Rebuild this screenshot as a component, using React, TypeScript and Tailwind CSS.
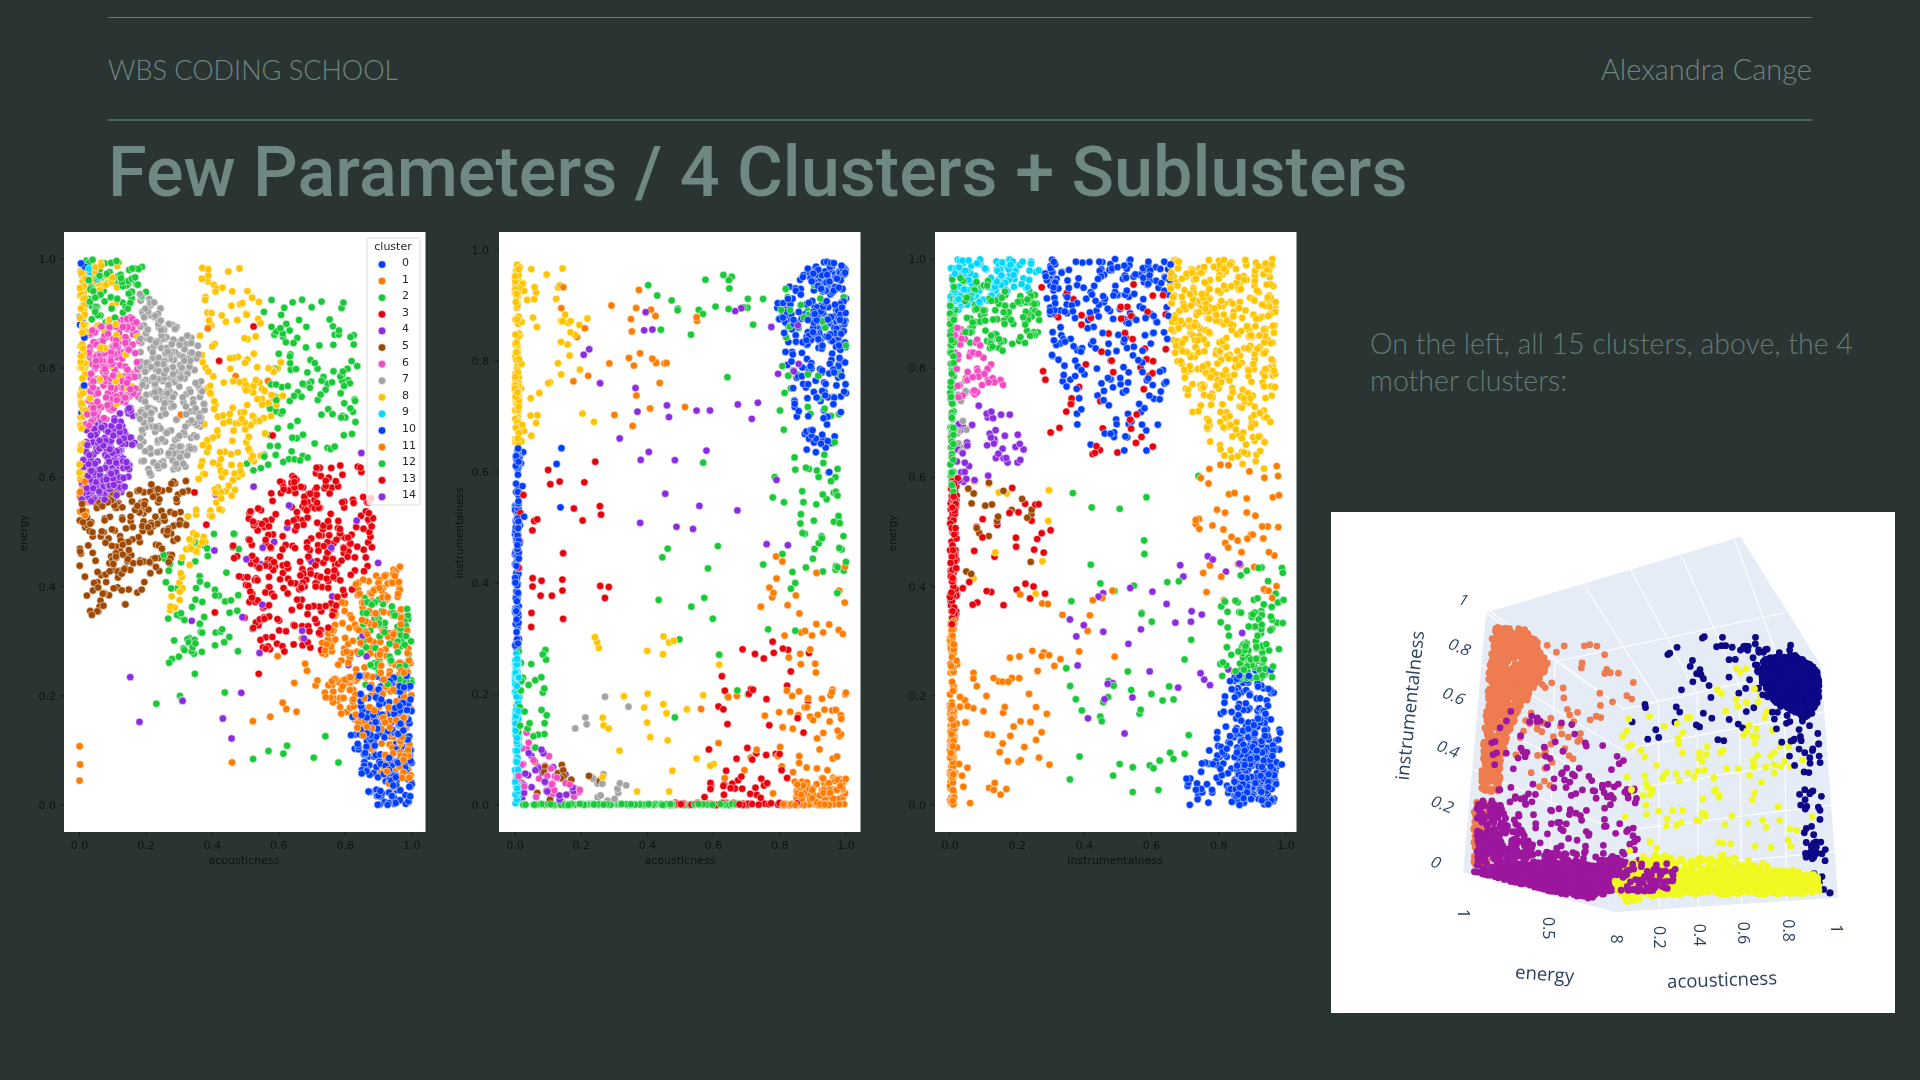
const C = {
  c0: "#023eff",
  c1: "#ff7c00",
  c2: "#1ac938",
  c3: "#e8000b",
  c4: "#8b2be2",
  c5: "#9f4800",
  c6: "#f14cc1",
  c7: "#a3a3a3",
  c8: "#ffc400",
  c9: "#00d7ff",
};

type Pt = [number, number];
type Region = { color: string; n: number; poly: Pt[]; bx?: number; by?: number };
type Dot = { x: number; y: number; color: string };

function rng(seed: number) {
  let a = seed;
  return () => {
    a = (a + 0x6d2b79f5) | 0;
    let t = Math.imul(a ^ (a >>> 15), 1 | a);
    t = (t + Math.imul(t ^ (t >>> 7), 61 | t)) ^ t;
    return ((t ^ (t >>> 14)) >>> 0) / 4294967296;
  };
}

function inside(p: Pt, poly: Pt[]) {
  let hit = false;
  for (let i = 0, j = poly.length - 1; i < poly.length; j = i++) {
    const [xi, yi] = poly[i];
    const [xj, yj] = poly[j];
    if (yi > p[1] !== yj > p[1] && p[0] < ((xj - xi) * (p[1] - yi)) / (yj - yi) + xi) hit = !hit;
  }
  return hit;
}

const rect = (x0: number, x1: number, y0: number, y1: number): Pt[] => [
  [x0, y0],
  [x1, y0],
  [x1, y1],
  [x0, y1],
];

function sample(regions: Region[], seed: number, mix = true): Dot[] {
  const r = rng(seed);
  const out: Dot[] = [];
  for (const reg of regions) {
    const xs = reg.poly.map((p) => p[0]);
    const ys = reg.poly.map((p) => p[1]);
    const x0 = Math.min(...xs);
    const x1 = Math.max(...xs);
    const y0 = Math.min(...ys);
    const y1 = Math.max(...ys);
    let made = 0;
    let tries = 0;
    while (made < reg.n && tries < reg.n * 60) {
      tries++;
      const x = x0 + (x1 - x0) * Math.pow(r(), reg.bx ?? 1);
      const y = y0 + (y1 - y0) * Math.pow(r(), reg.by ?? 1);
      if (inside([x, y], reg.poly)) {
        out.push({ x, y, color: reg.color });
        made++;
      }
    }
  }
  if (mix) {
    for (let i = out.length - 1; i > 0; i--) {
      const j = Math.floor(r() * (i + 1));
      [out[i], out[j]] = [out[j], out[i]];
    }
  }
  return out;
}

const chart1: Region[] = [
  { color: C.c8, n: 95, poly: rect(0, 0.02, 0.6, 0.98) },
  { color: C.c0, n: 16, poly: rect(0, 0.02, 0.62, 1) },
  { color: C.c9, n: 6, poly: rect(0, 0.06, 0.96, 1) },
  { color: C.c1, n: 22, poly: rect(0, 0.02, 0.53, 0.62) },
  { color: C.c2, n: 80, poly: [[0.02, 1], [0.2, 1], [0.2, 0.93], [0.09, 0.88], [0.03, 0.87]] },
  { color: C.c8, n: 32, poly: rect(0.01, 0.12, 0.83, 1) },
  { color: C.c6, n: 210, poly: [[0.03, 0.88], [0.18, 0.9], [0.18, 0.74], [0.1, 0.71], [0.02, 0.69]] },
  { color: C.c8, n: 16, poly: rect(0.03, 0.18, 0.73, 0.9) },
  { color: C.c4, n: 210, poly: [[0.02, 0.69], [0.1, 0.71], [0.16, 0.74], [0.17, 0.62], [0.13, 0.56], [0.0, 0.55]] },
  { color: C.c7, n: 300, poly: [[0.18, 0.94], [0.24, 0.93], [0.36, 0.84], [0.38, 0.72], [0.33, 0.62], [0.19, 0.6], [0.17, 0.74]] },
  { color: C.c5, n: 210, poly: [[0, 0.56], [0.16, 0.58], [0.33, 0.605], [0.33, 0.52], [0.28, 0.45], [0.15, 0.37], [0.02, 0.33], [0, 0.42]] },
  { color: C.c8, n: 75, poly: [[0.37, 0.99], [0.48, 0.99], [0.6, 0.86], [0.62, 0.72], [0.39, 0.72], [0.36, 0.86]] },
  { color: C.c8, n: 125, poly: [[0.39, 0.78], [0.62, 0.78], [0.56, 0.64], [0.44, 0.55], [0.36, 0.42], [0.26, 0.33], [0.33, 0.55], [0.36, 0.62]] },
  { color: C.c2, n: 125, poly: [[0.55, 0.93], [0.8, 0.93], [0.86, 0.8], [0.82, 0.65], [0.62, 0.62], [0.48, 0.6], [0.58, 0.75]] },
  { color: C.c2, n: 60, poly: [[0.25, 0.46], [0.48, 0.52], [0.48, 0.32], [0.4, 0.28], [0.27, 0.28]] },
  { color: C.c2, n: 12, poly: rect(0.2, 0.48, 0.18, 0.3) },
  { color: C.c3, n: 310, poly: [[0.46, 0.5], [0.58, 0.59], [0.72, 0.63], [0.86, 0.62], [0.89, 0.52], [0.88, 0.44], [0.78, 0.36], [0.72, 0.27], [0.55, 0.28], [0.47, 0.36]] },
  { color: C.c2, n: 80, poly: [[0.84, 0.38], [1, 0.38], [1, 0.22], [0.84, 0.22]] },
  { color: C.c0, n: 230, poly: [[0.84, 0.24], [1, 0.24], [1, 0], [0.88, 0], [0.8, 0.12]], bx: 0.6 },
  { color: C.c1, n: 170, poly: [[0.78, 0.24], [1, 0.25], [1, 0.02], [0.9, 0.04], [0.85, 0.13], [0.72, 0.2]] },
  { color: C.c1, n: 150, poly: [[0.76, 0.36], [0.84, 0.41], [0.97, 0.44], [1, 0.26], [0.8, 0.22], [0.7, 0.28]] },
  { color: C.c4, n: 28, poly: rect(0.4, 0.9, 0.24, 0.66) },
  { color: C.c4, n: 7, poly: rect(0.05, 0.5, 0.08, 0.36) },
  { color: C.c1, n: 14, poly: rect(0.55, 0.8, 0.15, 0.34) },
  { color: C.c1, n: 8, poly: rect(0.3, 0.7, 0.0, 0.98) },
  { color: C.c3, n: 7, poly: rect(0.3, 0.6, 0.22, 0.93) },
  { color: C.c2, n: 7, poly: rect(0.45, 0.78, 0.06, 0.14) },
  { color: C.c1, n: 3, poly: [[0, 0], [0.002, 0], [0.002, 0.18], [0, 0.18]] },
];

const chart2: Region[] = [
  { color: C.c8, n: 130, poly: rect(0, 0.012, 0.65, 0.975) },
  { color: C.c8, n: 40, poly: rect(0.01, 0.16, 0.65, 0.97), bx: 1.5 },
  { color: C.c8, n: 14, poly: rect(0.1, 0.25, 0.68, 0.9) },
  { color: C.c1, n: 20, poly: rect(0.05, 0.48, 0.68, 0.97) },
  { color: C.c0, n: 120, poly: rect(0, 0.012, 0.28, 0.645) },
  { color: C.c0, n: 12, poly: rect(0.01, 0.17, 0.47, 0.65), bx: 2 },
  { color: C.c3, n: 30, poly: rect(0.01, 0.37, 0.32, 0.62), bx: 1.5 },
  { color: C.c9, n: 120, poly: rect(0, 0.012, 0, 0.275) },
  { color: C.c2, n: 32, poly: rect(0.01, 0.1, 0.1, 0.28), bx: 2 },
  { color: C.c0, n: 190, poly: [[0.78, 0.9], [0.88, 0.97], [1, 0.985], [1, 0.7], [0.95, 0.58], [0.88, 0.62], [0.82, 0.78]], by: 0.7 },
  { color: C.c0, n: 120, poly: rect(0.9, 1, 0.82, 0.98) },
  { color: C.c2, n: 40, poly: [[0.8, 0.92], [1, 0.96], [1, 0.7], [0.8, 0.7]] },
  { color: C.c2, n: 24, poly: rect(0.4, 0.85, 0.84, 0.97) },
  { color: C.c2, n: 50, poly: rect(0.78, 1, 0.38, 0.66), bx: 0.6 },
  { color: C.c2, n: 10, poly: rect(0.55, 0.85, 0.3, 0.8) },
  { color: C.c2, n: 14, poly: rect(0.4, 0.85, 0.15, 0.48) },
  { color: C.c4, n: 36, poly: rect(0.2, 0.88, 0.45, 0.92) },
  { color: C.c1, n: 10, poly: rect(0.25, 0.55, 0.68, 0.95) },
  { color: C.c1, n: 62, poly: rect(0.8, 1, 0.05, 0.45), bx: 0.8, by: 1.4 },
  { color: C.c1, n: 65, poly: rect(0.84, 1, 0.005, 0.05), bx: 0.8 },
  { color: C.c1, n: 8, poly: rect(0.7, 0.88, 0.34, 0.46) },
  { color: C.c1, n: 40, poly: rect(0.8, 1, 0, 0.002) },
  { color: C.c2, n: 150, poly: rect(0.02, 0.68, 0, 0.002) },
  { color: C.c3, n: 50, poly: rect(0.48, 0.86, 0, 0.004) },
  { color: C.c3, n: 42, poly: rect(0.53, 0.9, 0.01, 0.3) },
  { color: C.c3, n: 14, poly: rect(0.55, 0.85, 0.01, 0.04) },
  { color: C.c8, n: 30, poly: rect(0.24, 0.62, 0.02, 0.31) },
  { color: C.c1, n: 12, poly: rect(0.55, 0.82, 0.02, 0.2) },
  { color: C.c6, n: 34, poly: [[0.01, 0.14], [0.05, 0.13], [0.2, 0.03], [0.2, 0.005], [0.01, 0.005]] },
  { color: C.c4, n: 24, poly: [[0.02, 0.1], [0.08, 0.1], [0.2, 0.03], [0.18, 0.005], [0.02, 0.005]] },
  { color: C.c5, n: 16, poly: [[0.02, 0.08], [0.18, 0.1], [0.28, 0.08], [0.3, 0.005], [0.02, 0.005]] },
  { color: C.c7, n: 14, poly: [[0.18, 0.04], [0.26, 0.07], [0.34, 0.04], [0.34, 0.005], [0.18, 0.005]] },
  { color: C.c7, n: 5, poly: rect(0.18, 0.35, 0.08, 0.22) },
];

const chart3: Region[] = [
  { color: C.c9, n: 120, poly: [[0, 1], [0.26, 1], [0.27, 0.95], [0.15, 0.93], [0, 0.9]] },
  { color: C.c2, n: 125, poly: [[0, 0.97], [0.12, 0.96], [0.26, 0.94], [0.27, 0.86], [0.19, 0.83], [0.02, 0.84]] },
  { color: C.c2, n: 95, poly: rect(0, 0.012, 0.57, 0.92) },
  { color: C.c0, n: 250, poly: [[0.28, 1], [0.66, 1], [0.66, 0.82], [0.64, 0.62], [0.42, 0.62], [0.3, 0.82]], by: 0.5 },
  { color: C.c3, n: 55, poly: rect(0.27, 0.65, 0.64, 0.97) },
  { color: C.c8, n: 440, poly: [[0.65, 1], [0.97, 1], [0.97, 0.72], [0.93, 0.6], [0.8, 0.62], [0.72, 0.72], [0.66, 0.85]], by: 0.7 },
  { color: C.c6, n: 50, poly: [[0.01, 0.88], [0.08, 0.86], [0.17, 0.77], [0.02, 0.74]] },
  { color: C.c7, n: 14, poly: rect(0.01, 0.05, 0.64, 0.78) },
  { color: C.c4, n: 46, poly: [[0.01, 0.74], [0.22, 0.72], [0.22, 0.62], [0.06, 0.58], [0.01, 0.6]] },
  { color: C.c3, n: 100, poly: rect(0, 0.02, 0.33, 0.6) },
  { color: C.c3, n: 34, poly: rect(0.02, 0.3, 0.36, 0.6) },
  { color: C.c5, n: 22, poly: rect(0.04, 0.26, 0.42, 0.6) },
  { color: C.c8, n: 10, poly: rect(0.06, 0.3, 0.38, 0.6) },
  { color: C.c1, n: 130, poly: rect(0, 0.012, 0.0, 0.34) },
  { color: C.c1, n: 65, poly: rect(0.01, 0.3, 0.0, 0.3), bx: 1.5 },
  { color: C.c1, n: 14, poly: rect(0.2, 0.52, 0.22, 0.4) },
  { color: C.c1, n: 50, poly: rect(0.72, 0.98, 0.36, 0.63), by: 0.8 },
  { color: C.c2, n: 55, poly: rect(0.8, 0.98, 0.22, 0.38) },
  { color: C.c2, n: 40, poly: [[0.86, 0.3], [0.93, 0.3], [0.94, 0.23], [0.85, 0.23]] },
  { color: C.c2, n: 20, poly: rect(0.85, 1, 0.3, 0.45) },
  { color: C.c2, n: 30, poly: rect(0.35, 0.72, 0.02, 0.22) },
  { color: C.c2, n: 22, poly: rect(0.3, 0.75, 0.22, 0.62) },
  { color: C.c0, n: 190, poly: [[0.65, 0], [0.98, 0], [0.99, 0.1], [0.96, 0.25], [0.84, 0.25], [0.78, 0.12]], bx: 0.8 },
  { color: C.c0, n: 190, poly: [[0.84, 0], [0.97, 0], [0.97, 0.1], [0.93, 0.16], [0.86, 0.14]] },
  { color: C.c4, n: 30, poly: rect(0.35, 0.88, 0.2, 0.46) },
  { color: C.c4, n: 5, poly: rect(0.4, 0.62, 0.13, 0.24) },
];

function Dots({ dots }: { dots: Dot[] }) {
  return (
    <g stroke="#ffffff" strokeWidth={0.6} strokeOpacity={0.85}>
      {dots.map((d, i) => (
        <circle key={i} cx={d.x} cy={d.y} r={3.7} fill={d.color} />
      ))}
    </g>
  );
}

const legend = [C.c0, C.c1, C.c2, C.c3, C.c4, C.c5, C.c6, C.c7, C.c8, C.c9, C.c0, C.c1, C.c2, C.c3, C.c4];
const ticks = [0, 0.2, 0.4, 0.6, 0.8, 1];
const mplFont = "'DejaVu Sans', sans-serif";

type ChartProps = {
  left: number;
  width: number;
  card: number;
  x0: number;
  x1: number;
  yTop: number;
  labelEnd: number;
  xLabel: string;
  xLabelAt: number;
  yLabel: string;
  yLabelAt: number;
  regions: Region[];
  seed: number;
  withLegend?: boolean;
};

function Chart(p: ChartProps) {
  const px = (v: number) => p.x0 + (p.x1 - p.x0) * v;
  const py = (v: number) => 805 - (805 - p.yTop) * v;
  const dots = sample(p.regions, p.seed).map((d) => ({ ...d, x: px(d.x), y: py(d.y) }));
  return (
    <svg
      viewBox={`${p.left} 225 ${p.width} 660`}
      className="h-[660px] shrink-0 blur-[0.3px]"
      width={p.width}
      style={{ fontFamily: mplFont }}
    >
      <rect x={p.card} y={232} width={361.5} height={600} fill="#ffffff" />
      <Dots dots={dots} />
      {ticks.map((t) => (
        <g key={t} fill="#0e1312" fontSize={11}>
          <line x1={p.card - 4} x2={p.card} y1={py(t)} y2={py(t)} stroke="#0e1312" strokeWidth={0.8} />
          <text x={p.labelEnd} y={py(t) + 4} textAnchor="end">
            {t.toFixed(1)}
          </text>
          <line x1={px(t)} x2={px(t)} y1={832} y2={836} stroke="#0e1312" strokeWidth={0.8} />
          <text x={px(t)} y={849} textAnchor="middle">
            {t.toFixed(1)}
          </text>
        </g>
      ))}
      <text x={p.xLabelAt} y={864} textAnchor="middle" fontSize={11} fill="#0e1312">
        {p.xLabel}
      </text>
      <text
        transform={`translate(${p.yLabelAt} 533) rotate(-90)`}
        textAnchor="middle"
        fontSize={10.5}
        fill="#0e1312"
      >
        {p.yLabel}
      </text>
      {p.withLegend && (
        <g>
          <rect x={367} y={238} width={53} height={267} rx={2} fill="#ffffff" fillOpacity={0.8} stroke="#dcdcdc" />
          <text x={393} y={250} textAnchor="middle" fontSize={11} fill="#262626">
            cluster
          </text>
          {legend.map((c, i) => (
            <g key={i}>
              <circle cx={382} cy={264.5 + i * 16.6} r={3.8} fill={c} stroke="#ffffff" strokeWidth={0.5} />
              <text x={402} y={266 + i * 16.6} fontSize={11} fill="#262626">
                {i}
              </text>
            </g>
          ))}
        </g>
      )}
    </svg>
  );
}

// 3D plot: coordinates below are measured on a zoomed crop, sx/sy bring them to the card
const sx = (x: number) => (x - 30) / 2.613;
const sy = (y: number) => (y - 37) / 2.958;
const poly3 = (pts: Pt[]) => pts.map(([x, y]) => `${sx(x)},${sy(y)}`).join(" ");
const lerp = (a: Pt, b: Pt, t: number): Pt => [a[0] + (b[0] - a[0]) * t, a[1] + (b[1] - a[1]) * t];

const A: Pt = [375, 1105];
const B: Pt = [435, 335];
const Cn: Pt = [772, 1222];
const D: Pt = [795, 620];
const E: Pt = [1355, 1180];
const F: Pt = [1310, 490];
const G: Pt = [1100, 110];

const scene: Region[] = [
  { color: "#ee7c50", n: 800, poly: [[452, 372], [540, 385], [600, 490], [530, 610], [490, 700], [465, 870], [418, 865], [436, 620]] },
  { color: "#ee7c50", n: 70, poly: [[540, 400], [830, 430], [830, 580], [700, 720], [600, 850], [480, 860], [540, 620]] },
  { color: "#ee7c50", n: 90, poly: rect(403, 440, 880, 1085) },
  { color: "#9c179e", n: 110, poly: rect(410, 480, 890, 1050) },
  { color: "#9c179e", n: 170, poly: [[450, 620], [650, 640], [830, 800], [840, 1050], [440, 1050]], by: 0.8 },
  { color: "#9c179e", n: 500, poly: [[395, 1098], [430, 1000], [520, 960], [570, 1040], [830, 1060], [880, 1120], [700, 1182], [600, 1162]], by: 0.6 },
  { color: "#9c179e", n: 900, poly: [[400, 1100], [600, 1075], [800, 1085], [860, 1130], [700, 1175], [600, 1160]] },
  { color: "#0d0887", n: 50, poly: [[920, 400], [1150, 365], [1150, 720], [815, 720], [810, 600]] },
  { color: "#f0f921", n: 130, poly: [[790, 640], [1150, 470], [1290, 830], [1290, 1040], [800, 1040]] },
  { color: "#0d0887", n: 800, poly: [[1160, 470], [1250, 458], [1305, 510], [1305, 590], [1280, 650], [1190, 600], [1155, 540]] },
  { color: "#0d0887", n: 80, poly: [[1100, 420], [1230, 410], [1300, 620], [1310, 790], [1260, 830], [1190, 680]] },
  { color: "#0d0887", n: 48, poly: [[1250, 850], [1310, 850], [1335, 1165], [1280, 1165]] },
  { color: "#f0f921", n: 600, poly: [[840, 1045], [1050, 1050], [1300, 1110], [1310, 1165], [880, 1172], [795, 1195], [770, 1130]], by: 0.7 },
  { color: "#f0f921", n: 400, poly: [[900, 1100], [1280, 1110], [1290, 1160], [900, 1165]] },
  { color: "#9c179e", n: 70, poly: rect(780, 930, 1075, 1160) },
];

function Dots3({ dots }: { dots: Dot[] }) {
  return (
    <g>
      {dots.map((d, i) => (
        <circle key={i} cx={sx(d.x)} cy={sy(d.y)} r={3.4} fill={d.color} />
      ))}
    </g>
  );
}

function Plot3D() {
  const dots = sample(scene, 41, false);
  const levels = [0, 0.2, 0.4, 0.6, 0.8, 1];
  const acoustic: [Pt, Pt, Pt][] = [
    [[888, 1212], [886, 600], [690, 250]],
    [[990, 1205], [987, 578], [812, 205]],
    [[1103, 1198], [1097, 550], [945, 165]],
    [[1220, 1190], [1215, 522], [1085, 120]],
  ];
  const seg = (a: Pt, b: Pt) => ({ x1: sx(a[0]), y1: sy(a[1]), x2: sx(b[0]), y2: sy(b[1]) });
  const tickY: [string, number, number][] = [
    ["1", 375, 300],
    ["0.8", 365, 440],
    ["0.6", 350, 585],
    ["0.4", 335, 742],
    ["0.2", 320, 905],
    ["0", 303, 1077],
  ];
  const tickX: [string, number, number][] = [
    ["1", 372, 1225],
    ["0.5", 595, 1268],
    ["8", 772, 1300],
    ["0.2", 885, 1295],
    ["0.4", 990, 1288],
    ["0.6", 1105, 1282],
    ["0.8", 1222, 1275],
    ["1", 1348, 1270],
  ];
  return (
    <svg width={564} height={501} className="block blur-[0.3px]" style={{ fontFamily: "'Open Sans', sans-serif" }}>
      <polygon points={poly3([B, G, F, D])} fill="#e5ecf6" />
      <polygon points={poly3([A, B, D, Cn])} fill="#e5ecf6" />
      <polygon points={poly3([D, F, E, Cn])} fill="#e5ecf6" />
      <g stroke="#ffffff" strokeWidth={1.1}>
        {levels.map((t) => (
          <g key={t}>
            <line {...seg(lerp(A, B, t), lerp(Cn, D, t))} />
            <line {...seg(lerp(Cn, D, t), lerp(E, F, t))} />
          </g>
        ))}
        {acoustic.map(([a, b, c], i) => (
          <g key={i}>
            <line {...seg(a, b)} />
            <line {...seg(b, c)} />
          </g>
        ))}
        <line {...seg([600, 1170], [615, 480])} />
        <line {...seg([615, 480], [1215, 335])} />
        <line {...seg([445, 330], [795, 620])} />
      </g>
      <Dots3 dots={dots} />
      <g fill="#2a3f5f" fontSize={16}>
        {tickY.map(([t, x, y], i) => (
          <text key={i} textAnchor="middle" dominantBaseline="middle" transform={`translate(${sx(x)} ${sy(y)}) rotate(22) skewX(-10)`}>
            {t}
          </text>
        ))}
        {tickX.map(([t, x, y], i) => (
          <text key={i} textAnchor="middle" dominantBaseline="middle" transform={`translate(${sx(x)} ${sy(y)}) rotate(90)`}>
            {t}
          </text>
        ))}
      </g>
      <g fill="#2a3f5f" fontSize={18.5}>
        <text textAnchor="middle" dominantBaseline="middle" transform={`translate(${sx(240)} ${sy(610)}) rotate(-84)`}>
          instrumentalness
        </text>
        <text textAnchor="middle" dominantBaseline="middle" transform={`translate(${sx(588)} ${sy(1408)}) rotate(4)`}>
          energy
        </text>
        <text textAnchor="middle" dominantBaseline="middle" transform={`translate(${sx(1052)} ${sy(1425)}) rotate(-2)`}>
          acousticness
        </text>
      </g>
    </svg>
  );
}

export default function App() {
  return (
    <div className="w-[1920px] h-[1080px] overflow-hidden bg-[#293433] text-[#6e8580] font-['Lato',sans-serif] pt-[17px]">
      <div className="ml-[108px] w-[1704px] border-t border-[#61766f] border-b-2 border-b-[#50645f] h-[104px] flex items-center justify-between">
        <span className="text-[27px] font-light pt-[3px]">WBS CODING SCHOOL</span>
        <span className="text-[29px] font-light">Alexandra Cange</span>
      </div>
      <h1 className="ml-[108px] mt-[9px] h-[95px] text-[70.2px] leading-[84px] font-medium font-['Roboto',sans-serif] text-[#6f8883]">
        Few Parameters / 4 Clusters + Sublusters
      </h1>
      <div className="flex">
        <Chart left={0} width={440} card={64} x0={79.5} x1={411.7} yTop={259} labelEnd={56} xLabel="acousticness" xLabelAt={244} yLabel="energy" yLabelAt={27} regions={chart1} seed={7} withLegend />
        <Chart left={440} width={436} card={499} x0={515} x1={846} yTop={250} labelEnd={489} xLabel="acousticness" xLabelAt={680} yLabel="instrumentalness" yLabelAt={463} regions={chart2} seed={19} />
        <Chart left={876} width={444} card={935} x0={950} x1={1286} yTop={259} labelEnd={926} xLabel="instrumentalness" xLabelAt={1115} yLabel="energy" yLabelAt={896} regions={chart3} seed={23} />
        <div className="pl-[11px] w-[600px]">
          <p className="ml-[39px] mt-[100px] w-[510px] text-[28.5px] leading-[37px] font-light text-[#647a75]">
            On the left, all 15 clusters, above, the 4 mother clusters:
          </p>
          <div className="mt-[113px] w-[564px] h-[501px] bg-white">
            <Plot3D />
          </div>
        </div>
      </div>
    </div>
  );
}
